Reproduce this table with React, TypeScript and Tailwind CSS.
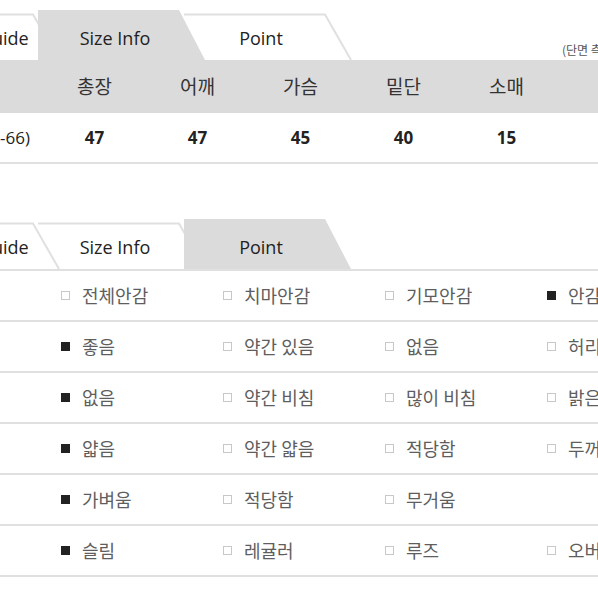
const KR = "font-['Noto_Sans_CJK_KR',sans-serif]";
const LATIN = "font-['Open_Sans','Noto_Sans_CJK_KR',sans-serif]";

const Tab = ({ label, active, textClass = "" }: { label: string; active?: boolean; textClass?: string }) => (
  <div className={`relative w-[146px] h-full shrink-0 ${active ? "z-10" : ""}`}>
    <svg className="absolute left-0 top-0 overflow-visible" width="167" height="50" viewBox="0 0 167 50">
      {active ? (
        <polygon points="0,0 141,0 167,50 0,50" fill="#dcdbdb" />
      ) : (
        <polyline points="0,4.5 141,4.5 167,50" fill="none" stroke="#e0e0e0" strokeWidth="2" />
      )}
    </svg>
    <div className={`relative flex h-full w-[154px] items-center justify-center pt-[6px] text-[18px] text-[#222] ${LATIN} ${textClass}`}>
      {label}
    </div>
  </div>
);

const TabBar = ({ active }: { active: number }) => (
  <div className="flex h-[50px] -ml-[108px]">
    <Tab label="Size Guide" active={active === 0} textClass="pl-[32px]" />
    <Tab label="Size Info" active={active === 1} />
    <Tab label="Point" active={active === 2} />
    {active === 1 && (
      <div className={`ml-[232px] self-end pb-[1px] text-[12px] whitespace-nowrap text-[#555] ${KR}`}>
        (단면 측정, 단위: cm)
      </div>
    )}
  </div>
);

const sizes = [
  { name: "총장", value: "47" },
  { name: "어깨", value: "47" },
  { name: "가슴", value: "45" },
  { name: "밑단", value: "40" },
  { name: "소매", value: "15" },
];

const points = [
  { label: "안감", items: [["전체안감", 0], ["치마안감", 0], ["기모안감", 0], ["안감없음", 1]] },
  { label: "신축성", items: [["좋음", 1], ["약간 있음", 0], ["없음", 0], ["허리밴딩", 0]] },
  { label: "비침", items: [["없음", 1], ["약간 비침", 0], ["많이 비침", 0], ["밝은색 비침", 0]] },
  { label: "두께", items: [["얇음", 1], ["약간 얇음", 0], ["적당함", 0], ["두꺼움", 0]] },
  { label: "무게", items: [["가벼움", 1], ["적당함", 0], ["무거움", 0]] },
  { label: "핏", items: [["슬림", 1], ["레귤러", 0], ["루즈", 0], ["오버핏", 0]] },
] as { label: string; items: [string, number][] }[];

export default function App() {
  return (
    <div className="w-[598px] h-[598px] overflow-hidden bg-white">
      {/* Size Info */}
      <div className="pt-[10px]">
        <TabBar active={1} />
        <div className={`flex h-[53px] items-center bg-[#dcdbdb] text-[19px] text-[#333] ${KR}`}>
          <div className="w-[120px] -ml-[77px] shrink-0 text-left">사이즈</div>
          {sizes.map((s) => (
            <div key={s.name} className="w-[103px] shrink-0 text-center">
              {s.name}
            </div>
          ))}
        </div>
        <div className={`flex h-[51px] items-center border-b-2 border-[#e0e0e0] text-[17px] text-[#222] ${LATIN}`}>
          <div className="w-[120px] -ml-[77px] shrink-0 pr-[13px] text-right whitespace-nowrap">FREE(55-66)</div>
          {sizes.map((s) => (
            <div key={s.name} className="w-[103px] shrink-0 text-center font-bold">
              {s.value}
            </div>
          ))}
        </div>
      </div>

      {/* Point */}
      <div className="mt-[55px]">
        <TabBar active={2} />
        <div className="border-b-2 border-[#e0e0e0]" />
        {points.map((row) => (
          <div key={row.label} className={`flex h-[51px] items-center border-b-2 border-[#e0e0e0] text-[18px] text-[#5e5e5e] ${KR}`}>
            <div className="w-[120px] -ml-[59px] shrink-0 text-left whitespace-nowrap">{row.label}</div>
            {row.items.map(([text, on]) => (
              <div key={text} className="flex w-[162px] shrink-0 items-center gap-[12px] whitespace-nowrap">
                <span className={`block h-[9px] w-[9px] shrink-0 ${on ? "bg-[#222]" : "border border-[#c8c8c8]"}`} />
                <span>{text}</span>
              </div>
            ))}
          </div>
        ))}
      </div>
    </div>
  );
}
